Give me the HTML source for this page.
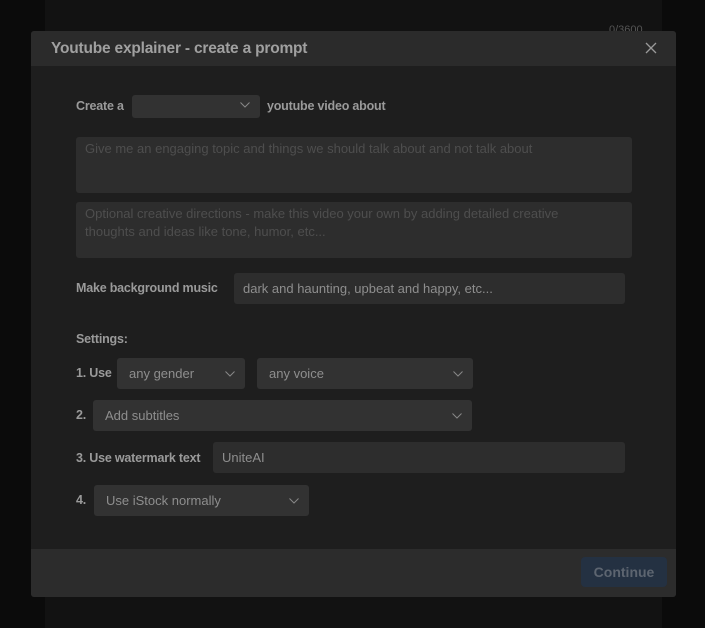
<!DOCTYPE html>
<html><head><meta charset="utf-8"><style>
*{box-sizing:border-box;margin:0;padding:0}
body{width:705px;height:628px;background:#0b0b0b;position:relative;overflow:hidden;font-family:"Liberation Sans",sans-serif;font-size:13px}
.bgp{position:absolute;left:45px;top:0;width:617px;height:628px;background:#121212}
.cnt{position:absolute;left:609px;top:24px;color:#555;font-size:11px}
.modal{position:absolute;left:31px;top:31px;width:645px;height:566px;background:#1e1e1e;border-radius:3px;overflow:hidden}
.hd{position:absolute;left:0;top:0;width:645px;height:35px;background:#2b2b2b}
.hd .t{position:absolute;left:20px;top:9px;color:#a0a0a0;font-size:15.5px;font-weight:bold;letter-spacing:-0.2px}
.x{position:absolute;left:614px;top:11px}
.ft{position:absolute;left:0;top:518px;width:645px;height:48px;background:#2c2c2c}
.btn{position:absolute;left:550px;top:8px;width:86px;height:30px;background:#243142;border-radius:4px;color:#5d6570;font-weight:bold;font-size:14px;text-align:center;line-height:30px}
.lb{position:absolute;color:#9a9a9a;font-weight:bold;font-size:12.5px;letter-spacing:-0.2px}
.f{position:absolute;background:#323232;border-radius:3px;color:#8e8e8e;font-size:13px;padding-left:12px;line-height:31px}
.ta{position:absolute;background:#2d2d2d;border-radius:3px;color:#4e4e4e;font-size:13px;padding:3px 9px;line-height:18px}
.ch{position:absolute;top:10px;right:10px}
</style></head><body>
<div class="bgp"></div><div class="cnt">0/3600</div>
<div class="modal">
<div class="hd"><div class="t">Youtube explainer - create a prompt</div>
<svg class="x" width="12" height="12" viewBox="0 0 12 12"><path d="M1 1L11 11M11 1L1 11" stroke="#9a9a9a" stroke-width="1.3"/></svg></div>

<div class="lb" style="left:45px;top:68px">Create a</div>
<div class="f" style="left:101px;top:64px;width:128px;height:23px"><svg class="ch" style="top:7px" width="10" height="6" viewBox="0 0 10 6"><path d="M0.5 0.5L5 5L9.5 0.5" stroke="#888" fill="none"/></svg></div>
<div class="lb" style="left:236px;top:68px">youtube video about</div>

<div class="ta" style="left:45px;top:106px;width:556px;height:56px">Give me an engaging topic and things we should talk about and not talk about</div>
<div class="ta" style="left:45px;top:171px;width:556px;height:56px;padding-right:64px">Optional creative directions - make this video your own by adding detailed creative thoughts and ideas like tone, humor, etc...</div>

<div class="lb" style="left:45px;top:250px">Make background music</div>
<div class="ta" style="left:203px;top:242px;width:391px;height:31px;color:#8e8e8e;padding:0 9px;line-height:31px">dark and haunting, upbeat and happy, etc...</div>

<div class="lb" style="left:45px;top:301px">Settings:</div>
<div class="lb" style="left:45px;top:335px">1. Use</div>
<div class="f" style="left:86px;top:327px;width:128px;height:31px">any gender<svg class="ch" style="top:13px" width="10" height="6" viewBox="0 0 10 6"><path d="M0.5 0.5L5 5L9.5 0.5" stroke="#888" fill="none"/></svg></div>
<div class="f" style="left:226px;top:327px;width:216px;height:31px">any voice<svg class="ch" style="top:13px" width="10" height="6" viewBox="0 0 10 6"><path d="M0.5 0.5L5 5L9.5 0.5" stroke="#888" fill="none"/></svg></div>

<div class="lb" style="left:45px;top:377px">2.</div>
<div class="f" style="left:62px;top:369px;width:379px;height:31px">Add subtitles<svg class="ch" style="top:13px" width="10" height="6" viewBox="0 0 10 6"><path d="M0.5 0.5L5 5L9.5 0.5" stroke="#888" fill="none"/></svg></div>

<div class="lb" style="left:45px;top:420px">3. Use watermark text</div>
<div class="ta" style="left:182px;top:411px;width:412px;height:31px;color:#8e8e8e;padding:0 9px;line-height:31px">UniteAI</div>

<div class="lb" style="left:45px;top:462px">4.</div>
<div class="f" style="left:63px;top:454px;width:215px;height:31px">Use iStock normally<svg class="ch" style="top:13px" width="10" height="6" viewBox="0 0 10 6"><path d="M0.5 0.5L5 5L9.5 0.5" stroke="#888" fill="none"/></svg></div>

<div class="ft"><div class="btn">Continue</div></div>
</div>
</body></html>
